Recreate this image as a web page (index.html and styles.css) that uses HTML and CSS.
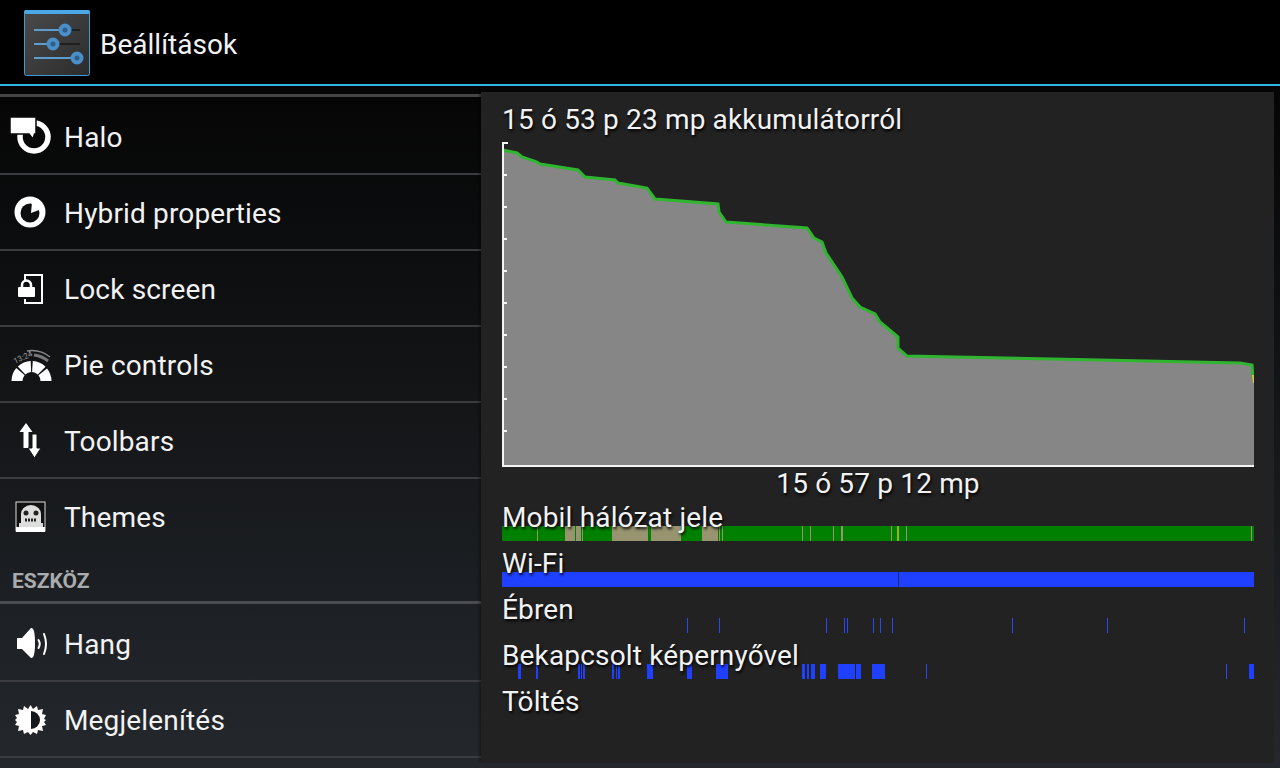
FILE: index.html
```html
<!DOCTYPE html>
<html lang="hu">
<head>
    <meta charset="utf-8">
    <title>Beállítások</title>
    <link rel="stylesheet" href="styles.css">
</head>
<body>
    <div class="action-bar">
        <svg class="app-icon" width="66" height="66" viewBox="0 0 66 66">
            <defs>
                <linearGradient id="app-bg" x1="0" y1="0" x2="1" y2="1">
                    <stop offset="0" stop-color="#4a4a4a"/>
                    <stop offset="1" stop-color="#2c2c2c"/>
                </linearGradient>
            </defs>
            <rect x="0.5" y="0.5" width="65" height="65" rx="2" fill="url(#app-bg)" stroke="#3f9bd6"/>
            <rect x="0" y="0" width="66" height="4" rx="2" fill="#4ba8e4"/>
            <g stroke="#5c9ccf" stroke-width="2">
                <path d="M10 20H42"/>
                <path d="M10 34H28"/>
                <path d="M10 48H52"/>
            </g>
            <g stroke="#1d1f20" stroke-width="2">
                <path d="M42 20H56"/>
                <path d="M28 34H56"/>
                <path d="M52 48H56"/>
            </g>
            <g fill="#2f5f88" stroke="#4a8fc8" stroke-width="4">
                <circle cx="41" cy="20" r="4.500"/>
                <circle cx="29" cy="34" r="4.500"/>
                <circle cx="53" cy="48" r="4.500"/>
            </g>
        </svg>
        <span class="app-title">Beállítások</span>
    </div>

    <div class="main">
        <div class="sidebar">
            <div class="item item-top">
                <svg class="item-icon" viewBox="0 0 48 48">
                    <circle cx="28" cy="23" r="14" fill="none" stroke="#fff" stroke-width="5.5"/>
                    <path d="M4 3H30V20H28.500L27 25L23 20H4Z" fill="#fff" stroke="#0a0a0a" stroke-width="1.500"/>
                </svg>
                <span>Halo</span>
            </div>
            <div class="item">
                <svg class="item-icon" viewBox="0 0 48 48">
                    <circle cx="24" cy="23" r="15.5" fill="#fff"/>
                    <circle cx="24" cy="24" r="9.5" fill="#0c0d0f"/>
                    <path d="M25 24L26 13L35 15L33 21Z" fill="#fff"/>
                </svg>
                <span>Hybrid properties</span>
            </div>
            <div class="item">
                <svg class="item-icon" viewBox="0 0 48 48">
                    <path d="M19 15V10H36V38H19V34" fill="none" stroke="#fff" stroke-width="2"/>
                    <rect x="12" y="22" width="17" height="10" rx="1" fill="#fff"/>
                    <path d="M16 23V20A4.5 4.5 0 0 1 25 20V23" fill="none" stroke="#fff" stroke-width="2.5"/>
                </svg>
                <span>Lock screen</span>
            </div>
            <div class="item">
                <svg class="item-icon" viewBox="0 0 48 48">
                    <path d="M11 40A14.5 14.5 0 0 1 40 40" fill="none" stroke="#fff" stroke-width="11" stroke-dasharray="10.2 1.6"/>
                    <path d="M21 10Q34 8 44 16" fill="none" stroke="#888" stroke-width="1.500"/>
                    <path d="M28 14Q36 15 42 20" fill="none" stroke="#777" stroke-width="3"/>
                    <text class="pie-clock" x="9" y="23" transform="rotate(-25 9 23)">13:24</text>
                </svg>
                <span>Pie controls</span>
            </div>
            <div class="item">
                <svg class="item-icon" viewBox="0 0 48 48">
                    <path d="M20 6L13.500 15H17.500V31H22.500V15H26.500Z" fill="#fff"/>
                    <path d="M28.500 41L35 31H31V17H26V31H22Z" fill="#fff" stroke="#0f1113"/>
                </svg>
                <span>Toolbars</span>
            </div>
            <div class="item">
                <svg class="item-icon" viewBox="0 0 48 48">
                    <rect x="10" y="9" width="29" height="29" fill="#111" stroke="#ddd"/>
                    <rect x="10" y="34" width="29" height="5" fill="#fff"/>
                    <path d="M13 34V30H15V21A9 8 0 0 1 35 21V30H37V34Z" fill="#ddd"/>
                    <circle cx="20" cy="20" r="2.500" fill="#222"/>
                    <circle cx="30" cy="20" r="2.500" fill="#222"/>
                    <path d="M19 27H31" stroke="#222" stroke-width="3" stroke-dasharray="2 1"/>
                </svg>
                <span>Themes</span>
            </div>
            <div class="section-title">ESZKÖZ</div>
            <div class="item item-first">
                <svg class="item-icon" viewBox="0 0 48 48">
                    <path d="M11 18H16L25 8Q29 7 29 23Q29 39 25 38L16 29H11Z" fill="#fff"/>
                    <g fill="none" stroke="#fff" stroke-linecap="round">
                        <path d="M32.500 20Q35 24 32.500 28" stroke-width="2"/>
                        <path d="M38 14Q42 24 38 34" stroke-width="2"/>
                    </g>
                </svg>
                <span>Hang</span>
            </div>
            <div class="item">
                <svg class="item-icon" viewBox="0 0 48 48">
                    <path fill="#fff" d="M24.500 9L27 13L31 10L32 14L37 13L36 18L40 19L38 23L40 24L38 26L40 29L36 30L37 35L32 34L31 38L27 36L24.500 39L22 36L18 38L17 34L12 35L13 30L9 29L11 26L9 24L11 22L9 19L13 18L12 13L17 14L18 10L22 13Z"/>
                    <path fill="#15171a" d="M25 15A9 9 0 0 1 25 33Z"/>
                </svg>
                <span>Megjelenítés</span>
            </div>
            <div class="item"></div>
        </div>

        <div class="panel">
            <div class="panel-title">15 ó 53 p 23 mp akkumulátorról</div>
            <svg class="chart" width="752" height="328" viewBox="502 140 752 328">
                <path class="chart-area" d="M503 150L517 153L522 157L537 162L540 164L578 170L585 177L615 180L618 183L647 188L655 199L718 204L719 212L726 222L807 228L814 238L822 242L826 253L842 277L852 298L860 307L875 314L880 322L898 337L898 348L907 356L1100 360L1240 363L1252 365L1254 383V466H503Z"/>
                <path class="chart-line" d="M503 150L517 153L522 157L537 162L540 164L578 170L585 177L615 180L618 183L647 188L655 199L718 204L719 212L726 222L807 228L814 238L822 242L826 253L842 277L852 298L860 307L875 314L880 322L898 337L898 348L907 356L1100 360L1240 363L1252 365L1253 377"/>
                <path class="chart-end" d="M1253 375L1254 383"/>
                <path class="chart-axis" d="M503 142V466H1254"/>
                <path class="chart-tick" d="M503 143H508M503 175H507M503 207H507M503 239H507M503 271H507M503 303H507M503 335H507M503 367H507M503 399H507M503 431H507"/>
            </svg>
            <div class="chart-label">15 ó 57 p 12 mp</div>

            <div class="track">
                <div class="track-label">Mobil hálózat jele</div>
                <svg class="track-bar" width="752" height="15" viewBox="502 0 752 15">
                    <rect class="signal-good" x="502" width="752" height="15"/>
                    <g class="signal-poor">
                        <rect x="537" width="1" height="15"/>
                        <rect x="565" width="10" height="15"/>
                        <rect x="576" width="5" height="15"/>
                        <rect x="582" width="1" height="15"/>
                        <rect x="612" width="36" height="15"/>
                        <rect x="651" width="30" height="15"/>
                        <rect x="702" width="16" height="15"/>
                        <rect x="719" width="1" height="15"/>
                        <rect x="722" width="1" height="15"/>
                        <rect x="802" width="1" height="15"/>
                        <rect x="810" width="1" height="15"/>
                        <rect x="833" width="1" height="15"/>
                        <rect x="841" width="2" height="15"/>
                        <rect x="891" width="1" height="15"/>
                        <rect x="906" width="1" height="15"/>
                        <rect x="1251" width="1" height="15"/>
                    </g>
                    <rect class="signal-fair" x="897" width="2" height="15"/>
                </svg>
            </div>
            <div class="track">
                <div class="track-label">Wi-Fi</div>
                <svg class="track-bar" width="752" height="15" viewBox="502 0 752 15">
                    <rect class="on" x="502" width="752" height="15"/>
                    <rect class="gap" x="898" width="1" height="15"/>
                </svg>
            </div>
            <div class="track">
                <div class="track-label">Ébren</div>
                <svg class="track-bar" width="752" height="15" viewBox="502 0 752 15">
                    <g class="on-thin">
                        <rect x="687" width="1" height="15"/>
                        <rect x="719" width="1" height="15"/>
                        <rect x="826" width="1" height="15"/>
                        <rect x="844" width="1" height="15"/>
                        <rect x="847" width="1" height="15"/>
                        <rect x="873" width="1" height="15"/>
                        <rect x="880" width="1" height="15"/>
                        <rect x="892" width="1" height="15"/>
                        <rect x="1012" width="1" height="15"/>
                        <rect x="1107" width="1" height="15"/>
                        <rect x="1244" width="1" height="15"/>
                    </g>
                </svg>
            </div>
            <div class="track">
                <div class="track-label">Bekapcsolt képernyővel</div>
                <svg class="track-bar" width="752" height="15" viewBox="502 0 752 15">
                    <g class="on">
                        <rect x="518" width="3" height="15"/>
                        <rect x="536" width="2" height="15"/>
                        <rect x="578" width="2" height="15"/>
                        <rect x="581" width="1" height="15"/>
                        <rect x="583" width="2" height="15"/>
                        <rect x="612" width="2" height="15"/>
                        <rect x="616" width="1" height="15"/>
                        <rect x="618" width="2" height="15"/>
                        <rect x="647" width="6" height="15"/>
                        <rect x="687" width="5" height="15"/>
                        <rect x="716" width="12" height="15"/>
                        <rect x="802" width="3" height="15"/>
                        <rect x="807" width="2" height="15"/>
                        <rect x="811" width="4" height="15"/>
                        <rect x="820" width="6" height="15"/>
                        <rect x="838" width="17" height="15"/>
                        <rect x="856" width="5" height="15"/>
                        <rect x="872" width="13" height="15"/>
                        <rect x="1249" width="5" height="15"/>
                    </g>
                    <g class="on-thin">
                        <rect x="926" width="1" height="15"/>
                        <rect x="1226" width="1" height="15"/>
                    </g>
                </svg>
            </div>
            <div class="track">
                <div class="track-label">Töltés</div>
            </div>
        </div>
    </div>
</body>
</html>
```

FILE: styles.css
```css
* {
    box-sizing: border-box;
}
html, body {
    height: 100%;
}
body {
    margin: 0;
    height: 768px;
    overflow: hidden;
    display: flex;
    flex-direction: column;
    font-family: Roboto, "Liberation Sans", sans-serif;
    font-size: 28px;
    letter-spacing: 0.16px;
    color: #f2f2f2;
    background: #000;
}

/* top bar */
.action-bar {
    flex: none;
    height: 86px;
    padding: 2px 0 0 24px;
    display: flex;
    align-items: center;
    gap: 10px;
    background: #000;
    border-bottom: 2px solid #33b5e5;
}
.app-title {
    padding-top: 2px;
    letter-spacing: 0;
}

.main {
    flex: 1;
    min-height: 0;
    display: flex;
    background: linear-gradient(#050505, #24282d);
}

/* left list */
.sidebar {
    flex: none;
    width: 481px;
    padding-top: 8px;
    overflow: hidden;
}
.item {
    height: 76px;
    padding: 2px 0 0 6px;
    display: flex;
    align-items: center;
    gap: 10px;
    border-top: 2px solid #3a3c3f;
}
.item-top {
    height: 79px;
    padding-top: 5px;
    border-top-width: 3px;
    border-top-color: #444;
}
.item-first {
    height: 79px;
    padding-top: 4px;
    border-top-width: 3px;
    border-top-color: #4a4c4f;
}
.item-icon {
    flex: none;
    width: 48px;
    height: 48px;
}
.pie-clock {
    font-size: 8px;
    letter-spacing: 0;
    fill: #999;
}
.section-title {
    height: 48px;
    padding: 17px 0 0 12px;
    font-size: 21px;
    font-weight: bold;
    line-height: 22px;
    letter-spacing: 0;
    color: #a9abad;
}

/* right panel */
.panel {
    flex: 1;
    margin: 6px 6px 6px 0;
    padding: 0 20px 0 21px;
    background: #222;
    box-shadow: -2px 0 2px rgba(0, 0, 0, 0.3);
}
.panel-title {
    height: 48px;
    padding-top: 12px;
    line-height: 32px;
    text-shadow: 1px 2px 3px #000;
}
.chart {
    display: block;
}
.chart-area {
    fill: #868686;
}
.chart-line {
    fill: none;
    stroke: #2fb52f;
    stroke-width: 3;
}
.chart-end {
    fill: none;
    stroke: #d8c040;
    stroke-width: 2;
}
.chart-axis {
    fill: none;
    stroke: #f4f4f4;
    stroke-width: 2;
}
.chart-tick {
    fill: none;
    stroke: #f4f4f4;
    stroke-width: 2;
}
.chart-label {
    height: 27px;
    line-height: 32px;
    text-align: center;
    text-shadow: 1px 2px 3px #000;
}
.track {
    height: 46px;
    padding-top: 7px;
}
.track-label {
    position: relative;
    z-index: 1;
    height: 30px;
    margin-bottom: -6px;
    line-height: 32px;
    text-shadow: 1px 2px 3px #000;
}
.track-bar {
    display: block;
}
.signal-good {
    fill: #008000;
}
.signal-poor {
    fill: #98946f;
}
.signal-fair {
    fill: #a0b000;
}
.on {
    fill: #2040ff;
}
.on-thin {
    fill: #2a48f0;
}
.gap {
    fill: #1a2a70;
}
```
